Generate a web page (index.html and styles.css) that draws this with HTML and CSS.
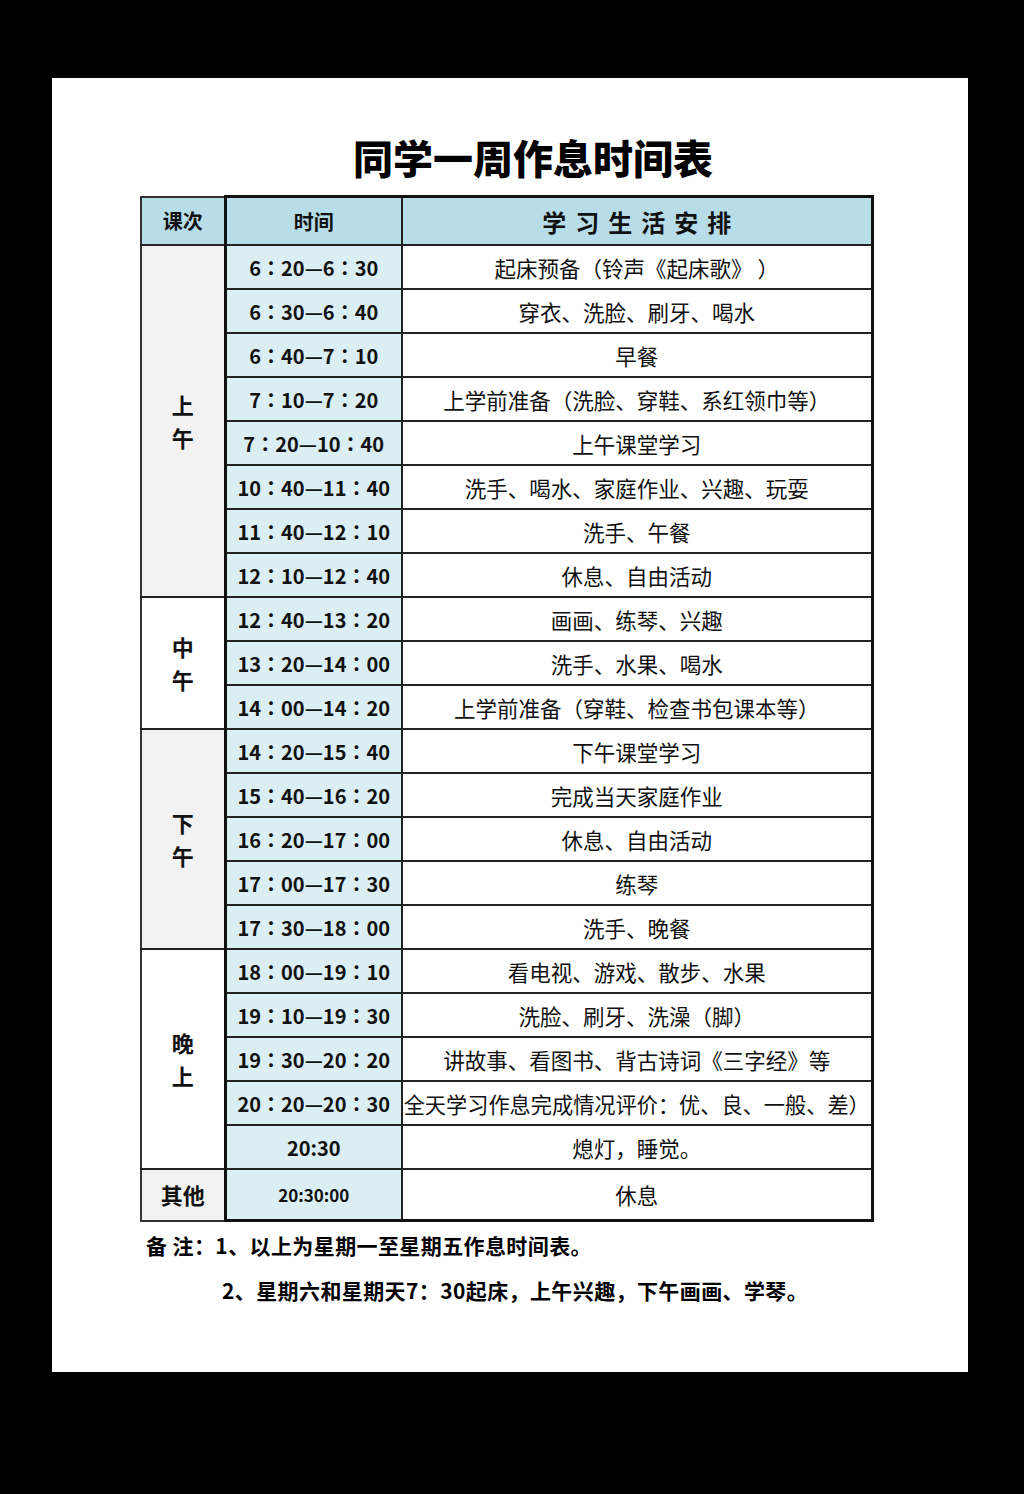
FILE: index.html
```html
<!DOCTYPE html>
<html lang="zh">
<head>
<meta charset="utf-8">
<title>同学一周作息时间表</title>
<link rel="stylesheet" href="styles.css">
</head>
<body>
<div class="page">
  <h1 class="title">同学一周作息时间表</h1>
  <table class="sched">
    <colgroup><col class="c1"><col class="c2"><col class="c3"></colgroup>
    <thead>
      <tr class="head">
        <th class="lbl">课次</th>
        <th class="tm">时间</th>
        <th class="act wide">学习生活安排</th>
      </tr>
    </thead>
    <tbody>
      <tr><td class="lbl gray" rowspan="8">上<br>午</td><td class="tm">6：20—6：30</td><td class="act">起床预备（铃声《起床歌》 ）</td></tr>
      <tr><td class="tm">6：30—6：40</td><td class="act">穿衣、洗脸、刷牙、喝水</td></tr>
      <tr><td class="tm">6：40—7：10</td><td class="act">早餐</td></tr>
      <tr><td class="tm">7：10—7：20</td><td class="act">上学前准备（洗脸、穿鞋、系红领巾等）</td></tr>
      <tr><td class="tm">7：20—10：40</td><td class="act">上午课堂学习</td></tr>
      <tr><td class="tm">10：40—11：40</td><td class="act">洗手、喝水、家庭作业、兴趣、玩耍</td></tr>
      <tr><td class="tm">11：40—12：10</td><td class="act">洗手、午餐</td></tr>
      <tr><td class="tm">12：10—12：40</td><td class="act">休息、自由活动</td></tr>
      <tr><td class="lbl" rowspan="3">中<br>午</td><td class="tm">12：40—13：20</td><td class="act">画画、练琴、兴趣</td></tr>
      <tr><td class="tm">13：20—14：00</td><td class="act">洗手、水果、喝水</td></tr>
      <tr><td class="tm">14：00—14：20</td><td class="act">上学前准备（穿鞋、检查书包课本等）</td></tr>
      <tr><td class="lbl gray" rowspan="5">下<br>午</td><td class="tm">14：20—15：40</td><td class="act">下午课堂学习</td></tr>
      <tr><td class="tm">15：40—16：20</td><td class="act">完成当天家庭作业</td></tr>
      <tr><td class="tm">16：20—17：00</td><td class="act">休息、自由活动</td></tr>
      <tr><td class="tm">17：00—17：30</td><td class="act">练琴</td></tr>
      <tr><td class="tm">17：30—18：00</td><td class="act">洗手、晚餐</td></tr>
      <tr><td class="lbl" rowspan="5">晚<br>上</td><td class="tm">18：00—19：10</td><td class="act">看电视、游戏、散步、水果</td></tr>
      <tr><td class="tm">19：10—19：30</td><td class="act">洗脸、刷牙、洗澡（脚）</td></tr>
      <tr><td class="tm">19：30—20：20</td><td class="act">讲故事、看图书、背古诗词《三字经》等</td></tr>
      <tr><td class="tm">20：20—20：30</td><td class="act tight">全天学习作息完成情况评价：优、良、一般、差）</td></tr>
      <tr><td class="tm">20:30</td><td class="act">熄灯，睡觉。</td></tr>
      <tr class="last"><td class="lbl gray">其他</td><td class="tm smaller">20:30:00</td><td class="act">休息</td></tr>
    </tbody>
  </table>
  <p class="note n1">备 注：1、以上为星期一至星期五作息时间表。</p>
  <p class="note n2">2、星期六和星期天7：30起床，上午兴趣，下午画画、学琴。</p>
</div>
</body>
</html>
```

FILE: styles.css
```css
html, body {
  margin: 0;
  padding: 0;
  background: #000;
}
body {
  padding: 78px 0 0 52px;
  height: 1494px;
  box-sizing: border-box;
  font-family: "Noto Sans CJK SC", sans-serif;
  color: #111;
}
.page {
  width: 916px;
  height: 1294px;
  background: #fff;
  box-sizing: border-box;
  padding-top: 54px;
}
.title {
  margin: 0;
  padding-left: 46px;
  text-align: center;
  font-size: 40px;
  line-height: 50px;
  font-weight: 900;
  color: #000;
}
.sched {
  margin: 13px 0 0 88px;
  width: 731px;
  border-collapse: collapse;
  table-layout: fixed;
}
.c1 { width: 84px; }
.c2 { width: 177px; }
.c3 { width: 470px; }
.sched td, .sched th {
  padding: 0;
  text-align: center;
  vertical-align: middle;
  border: 2px solid #222;
  height: 42px;
}
.head th {
  background: #b7dde8;
  height: 46px;
  border-top: 3px solid #111;
}
.head th.lbl {
  border-top: 2px solid #333;
  font-size: 20px;
  font-weight: 700;
}
.head th.tm {
  font-family: "Noto Sans CJK SC", sans-serif;
  font-size: 20px;
  font-weight: 700;
}
.head th.wide {
  font-size: 24px;
  font-weight: 700;
  letter-spacing: 9px;
  text-indent: 9px;
}
.lbl {
  border-left: 2px solid #333 !important;
  font-size: 22px;
  font-weight: 700;
  line-height: 33px;
  background: #fff;
}
.lbl.gray { background: #f2f2f2; }
.tm {
  background: #daeef3;
  border-left: 3px solid #111 !important;
  font-family: "Noto Sans CJK JP", sans-serif;
  font-weight: 700;
  font-size: 20px;
  white-space: nowrap;
}
.tm.smaller { font-size: 17px; }
.act {
  border-right: 3px solid #111 !important;
  font-size: 21.5px;
  font-weight: 400;
  white-space: nowrap;
  background: #fff;
}
.act.tight { font-size: 21.2px; }
.last td { height: 49px; border-bottom: 3px solid #111; }
.last td.lbl { border-bottom: 2px solid #333; }
.note {
  margin: 0;
  font-size: 21px;
  font-weight: 700;
  color: #000;
  line-height: 30px;
  letter-spacing: 0.4px;
}
.n1 { margin-top: 8px; padding-left: 94px; }
.n2 { margin-top: 15px; padding-left: 170px; }
```
